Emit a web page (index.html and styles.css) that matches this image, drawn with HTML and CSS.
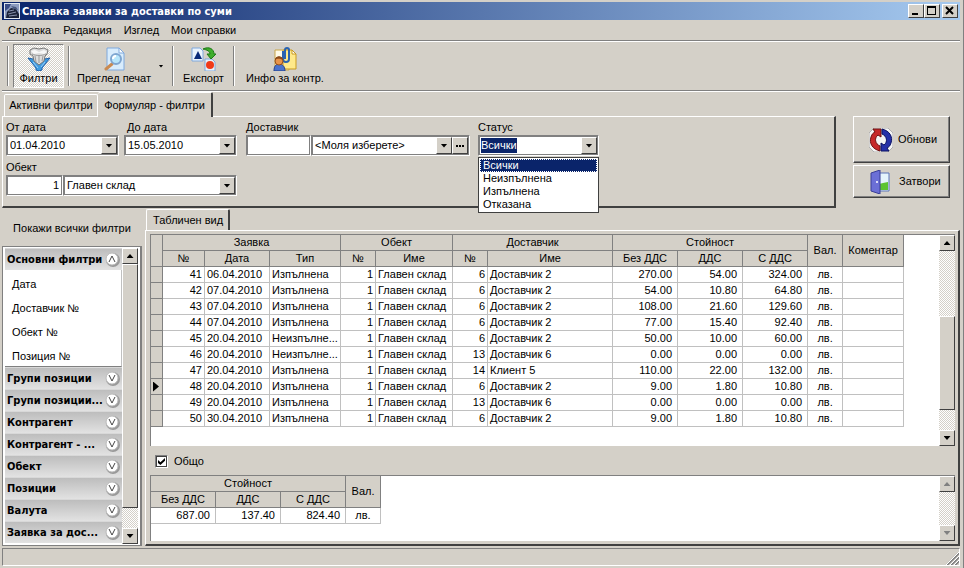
FILE: index.html
```
<!DOCTYPE html>
<html lang="bg">
<head>
    <meta charset="UTF-8">
    <title>Справка заявки за доставки по суми</title>
    <link rel="stylesheet" href="styles.css">
</head>

<body>
    <header class="titlebar">
        <svg class="app-icon" width="16" height="16" viewBox="0 0 16 16">
            <rect width="16" height="16" fill="#dfe6f0"/>
            <rect x="1" y="1" width="14" height="14" fill="#8d9cc0"/>
            <path d="M1 1h6l-2 4-4 3z" fill="#3b4d86"/>
            <path d="M3 9l4-4 5 1 3 5v4H2z" fill="#1b2238"/>
            <path d="M7 3l5 1 2 3-4-1z" fill="#48587f"/>
            <path d="M5 8l5-1M4 11l8-2M5 13l8-1" stroke="#8a93ad"/>
        </svg>
        <h1>Справка заявки за доставки по суми</h1>
        <button type="button" class="win-btn" aria-label="Минимизирай"><svg width="12" height="10"><path d="M2 7h6v2H2z"/></svg></button>
        <button type="button" class="win-btn" aria-label="Максимизирай"><svg width="12" height="10"><path d="M1 0h9v9H1zM2 2v6h7V2z" fill-rule="evenodd"/></svg></button>
        <button type="button" class="win-btn win-close" aria-label="Затвори прозореца"><svg width="12" height="10"><path d="M2 1l7 7M9 1L2 8" stroke="#000" stroke-width="2"/></svg></button>
    </header>

    <nav class="menu">
        <a href="#">Справка</a>
        <a href="#">Редакция</a>
        <a href="#">Изглед</a>
        <a href="#">Мои справки</a>
    </nav>

    <div class="toolbar">
        <span class="separator"></span>
        <button type="button" class="tool pressed">
            <svg width="24" height="24" viewBox="0 0 24 24">
                <path d="M1 11l5 1 6 6 6-6 5-1-8 10v2l-3 1-3-1v-2z" fill="#3f9be0" stroke="#1f5fa8"/>
                <path d="M3 3l4-2 5 1 5-1 4 2-1 4-2 2-1 5-5 4-5-4-1-5-3-2z" fill="#dcdcdc" stroke="#777"/>
                <path d="M4 4l4-1 4 2 5-2 3 2-3 2-5-1-5 1z" fill="#f8f8f8"/>
                <path d="M5 7c4 2 10 2 14 0M8 9l1 6M12 9v7M16 9l-1 5" fill="none" stroke="#999"/>
                <path d="M6 15l5 6M18 15l-4 5" fill="none" stroke="#9ad0f8"/>
            </svg>
            <span>Филтри</span>
        </button>
        <span class="separator"></span>
        <button type="button" class="tool tool-preview">
            <svg width="24" height="24" viewBox="0 0 24 24">
                <path d="M5 1h12l5 5v17H5z" fill="#d8ecfc" stroke="#7fa8dc"/>
                <path d="M17 1v5h5z" fill="#fff" stroke="#7fa8dc"/>
                <path d="M10 17l-6 5" stroke="#c98a52" stroke-width="3" stroke-linecap="round"/>
                <circle cx="14" cy="12" r="5" fill="#b8e6fb" stroke="#7fa6d0" stroke-width="2"/>
                <path d="M11 12a3 3 0 0 1 3-3" fill="none" stroke="#fff" stroke-width="2"/>
            </svg>
            <span>Преглед печат</span>
        </button>
        <button type="button" class="tool-arrow" aria-label="Още"><i class="down"></i></button>
        <span class="separator"></span>
        <button type="button" class="tool">
            <svg width="26" height="24" viewBox="0 0 26 24">
                <path d="M1 1h8l3 3v10H1z" fill="#eaf3fd" stroke="#7fa8dc"/>
                <path d="M7 4l4 8H3z" fill="#0a2a78"/>
                <path d="M14 12h7l3 3v9H14z" fill="#eaf3fd" stroke="#7fa8dc"/>
                <circle cx="19" cy="18" r="4" fill="#f03a18"/>
                <path d="M12 2c6-3 11 0 11 5h2l-5 5-4-5h3c0-3-3-4-7-5z" fill="#3fae2c" stroke="#1d7a17"/>
            </svg>
            <span>Експорт</span>
        </button>
        <span class="separator"></span>
        <button type="button" class="tool tool-info">
            <svg width="26" height="24" viewBox="0 0 26 24">
                <path d="M3 3h14v20H3z" fill="#fffbe8" stroke="#c9a648"/>
                <path d="M11 3h9l4 4v15H11z" fill="#ffe98a" stroke="#c99a20"/>
                <path d="M20 3v4h4z" fill="#fff" stroke="#c99a20"/>
                <path d="M11 4v8a3 3 0 0 0 6 0V3a2 2 0 0 0-4 0v9" fill="none" stroke="#2a63b0" stroke-width="2"/>
                <path d="M2 24c0-5 2-7 5-7s6 2 6 7z" fill="#4a72cc" stroke="#24408c"/>
                <circle cx="7" cy="14" r="4" fill="#e8944a" stroke="#94501c"/>
                <path d="M3 13c0-5 8-5 8 0-3-1-5-2-8 0z" fill="#8c4a18"/>
            </svg>
            <span>Инфо за контр.</span>
        </button>
    </div>

    <section class="top">
        <div class="filters">
            <div class="tabs">
                <button type="button" class="tab">Активни филтри</button>
                <button type="button" class="tab active">Формуляр - филтри</button>
            </div>
            <form class="filter-form">
                <div class="filter-row">
                    <div class="field">
                        <label for="fromDate">От дата</label>
                        <div class="combo">
                            <input type="text" id="fromDate" value="01.04.2010">
                            <button type="button" class="arrow" aria-label="Избор на дата"><i class="down"></i></button>
                        </div>
                    </div>
                    <div class="field">
                        <label for="toDate" class="indent">До дата</label>
                        <div class="combo">
                            <input type="text" id="toDate" value="15.05.2010">
                            <button type="button" class="arrow" aria-label="Избор на дата"><i class="down"></i></button>
                        </div>
                    </div>
                    <div class="field supplier">
                        <label for="supplierNo">Доставчик</label>
                        <div class="pair">
                            <div class="combo code"><input type="text" id="supplierNo"></div>
                            <div class="combo">
                                <select aria-label="Доставчик"><option>&lt;Моля изберете&gt;</option></select>
                                <button type="button" class="arrow" aria-label="Отвори"><i class="down"></i></button>
                                <button type="button" class="arrow" aria-label="Търсене"><i class="dots"></i></button>
                            </div>
                        </div>
                    </div>
                    <div class="field status">
                        <label for="status">Статус</label>
                        <div class="combo open">
                            <select id="status"><option>Всички</option></select>
                            <button type="button" class="arrow" aria-label="Отвори"><i class="down"></i></button>
                        </div>
                        <ul class="dropdown" role="listbox" aria-label="Статус">
                            <li role="option" class="selected" aria-selected="true">Всички</li>
                            <li role="option">Неизпълнена</li>
                            <li role="option">Изпълнена</li>
                            <li role="option">Отказана</li>
                        </ul>
                    </div>
                </div>
                <div class="filter-row">
                    <div class="field object">
                        <label for="objectNo">Обект</label>
                        <div class="pair">
                            <div class="combo code"><input type="text" id="objectNo" class="right" value="1"></div>
                            <div class="combo">
                                <select aria-label="Обект"><option>Главен склад</option></select>
                                <button type="button" class="arrow" aria-label="Отвори"><i class="down"></i></button>
                            </div>
                        </div>
                    </div>
                </div>
            </form>
        </div>
        <div class="actions">
            <button type="button" class="action refresh">
                <svg width="24" height="24" viewBox="0 0 24 24">
                    <path d="M5 0h14l5 5v14l-5 5H5l-5-5V5z" fill="#f4f4f4" stroke="#b0b0b0"/>
                    <path d="M11 23C3 21 0 15 2 9c1-3 2-4 4-5L4 1h8v8L9 7c-4 3-3 9 2 11z" fill="#c62828" stroke="#6e1010"/>
                    <path d="M13 1c8 2 11 8 9 14-1 3-2 4-4 5l2 3h-8v-8l3 2c4-3 3-9-2-11z" fill="#2530a8" stroke="#0c1260"/>
                </svg>
                <span>Обнови</span>
            </button>
            <button type="button" class="action">
                <svg width="24" height="24" viewBox="0 0 24 24">
                    <path d="M9 3h11v18H9z" fill="#e4f4fc" stroke="#5a74b8"/>
                    <path d="M10 14l4-1 5-1v8h-9z" fill="#5cc432"/>
                    <path d="M2 3l9-3v24l-9-3z" fill="#6b6fd6" stroke="#3a3e96"/>
                    <circle cx="8" cy="12" r="1" fill="#fff"/>
                </svg>
                <span>Затвори</span>
            </button>
        </div>
    </section>

    <main class="main">
        <aside class="sidebar">
            <a href="#" class="show-all">Покажи всички филтри</a>
            <div class="listbox">
                <div class="groups">
                    <button type="button" class="group"><span>Основни филтри</span><svg width="15" height="15" viewBox="0 0 15 15"><circle cx="8" cy="8" r="7" fill="#999"/><circle cx="7" cy="7" r="6" fill="#fff" stroke="#bbb"/><path d="M4 10l3-6 3 6" fill="none" stroke="#444"/></svg></button>
                    <ul class="group-items">
                        <li><a href="#">Дата</a></li>
                        <li><a href="#">Доставчик №</a></li>
                        <li><a href="#">Обект №</a></li>
                        <li><a href="#">Позиция №</a></li>
                    </ul>
                    <button type="button" class="group"><span>Групи позиции</span><svg width="15" height="15" viewBox="0 0 15 15"><circle cx="8" cy="8" r="7" fill="#999"/><circle cx="7" cy="7" r="6" fill="#fff" stroke="#bbb"/><path d="M4 4l3 6 3-6" fill="none" stroke="#444"/></svg></button>
                    <button type="button" class="group"><span>Групи позиции...</span><svg width="15" height="15" viewBox="0 0 15 15"><circle cx="8" cy="8" r="7" fill="#999"/><circle cx="7" cy="7" r="6" fill="#fff" stroke="#bbb"/><path d="M4 4l3 6 3-6" fill="none" stroke="#444"/></svg></button>
                    <button type="button" class="group"><span>Контрагент</span><svg width="15" height="15" viewBox="0 0 15 15"><circle cx="8" cy="8" r="7" fill="#999"/><circle cx="7" cy="7" r="6" fill="#fff" stroke="#bbb"/><path d="M4 4l3 6 3-6" fill="none" stroke="#444"/></svg></button>
                    <button type="button" class="group"><span>Контрагент - ...</span><svg width="15" height="15" viewBox="0 0 15 15"><circle cx="8" cy="8" r="7" fill="#999"/><circle cx="7" cy="7" r="6" fill="#fff" stroke="#bbb"/><path d="M4 4l3 6 3-6" fill="none" stroke="#444"/></svg></button>
                    <button type="button" class="group"><span>Обект</span><svg width="15" height="15" viewBox="0 0 15 15"><circle cx="8" cy="8" r="7" fill="#999"/><circle cx="7" cy="7" r="6" fill="#fff" stroke="#bbb"/><path d="M4 4l3 6 3-6" fill="none" stroke="#444"/></svg></button>
                    <button type="button" class="group"><span>Позиции</span><svg width="15" height="15" viewBox="0 0 15 15"><circle cx="8" cy="8" r="7" fill="#999"/><circle cx="7" cy="7" r="6" fill="#fff" stroke="#bbb"/><path d="M4 4l3 6 3-6" fill="none" stroke="#444"/></svg></button>
                    <button type="button" class="group"><span>Валута</span><svg width="15" height="15" viewBox="0 0 15 15"><circle cx="8" cy="8" r="7" fill="#999"/><circle cx="7" cy="7" r="6" fill="#fff" stroke="#bbb"/><path d="M4 4l3 6 3-6" fill="none" stroke="#444"/></svg></button>
                    <button type="button" class="group"><span>Заявка за дос...</span><svg width="15" height="15" viewBox="0 0 15 15"><circle cx="8" cy="8" r="7" fill="#999"/><circle cx="7" cy="7" r="6" fill="#fff" stroke="#bbb"/><path d="M4 4l3 6 3-6" fill="none" stroke="#444"/></svg></button>
                </div>
                <div class="scrollbar side-scroll">
                    <button type="button" class="arrow" aria-label="Нагоре"><i class="up"></i></button>
                    <div class="thumb"></div>
                    <div class="after"></div>
                    <button type="button" class="arrow" aria-label="Надолу"><i class="down"></i></button>
                </div>
            </div>
        </aside>

        <section class="report">
            <div class="tabs">
                <button type="button" class="tab active">Табличен вид</button>
            </div>
            <div class="page">
                <div class="grid grid-main">
                    <div class="grid-view">
                        <table>
                            <colgroup>
                                <col class="w12"><col class="w42"><col class="w65"><col class="w71">
                                <col class="w35"><col class="w77"><col class="w35"><col class="w125">
                                <col class="w65"><col class="w65"><col class="w65"><col class="w35"><col class="w61">
                            </colgroup>
                            <thead>
                                <tr>
                                    <th rowspan="2"></th>
                                    <th colspan="3">Заявка</th>
                                    <th colspan="2">Обект</th>
                                    <th colspan="2">Доставчик</th>
                                    <th colspan="3">Стойност</th>
                                    <th rowspan="2">Вал.</th>
                                    <th rowspan="2">Коментар</th>
                                </tr>
                                <tr>
                                    <th>№</th><th>Дата</th><th>Тип</th>
                                    <th>№</th><th>Име</th>
                                    <th>№</th><th>Име</th>
                                    <th>Без ДДС</th><th>ДДС</th><th>С ДДС</th>
                                </tr>
                            </thead>
                            <tbody>
                                <tr><th></th><td class="num">41</td><td>06.04.2010</td><td>Изпълнена</td><td class="num">1</td><td>Главен склад</td><td class="num">6</td><td>Доставчик 2</td><td class="sum">270.00</td><td class="sum">54.00</td><td class="sum">324.00</td><td class="cur">лв.</td><td></td></tr>
                                <tr><th></th><td class="num">42</td><td>07.04.2010</td><td>Изпълнена</td><td class="num">1</td><td>Главен склад</td><td class="num">6</td><td>Доставчик 2</td><td class="sum">54.00</td><td class="sum">10.80</td><td class="sum">64.80</td><td class="cur">лв.</td><td></td></tr>
                                <tr><th></th><td class="num">43</td><td>07.04.2010</td><td>Изпълнена</td><td class="num">1</td><td>Главен склад</td><td class="num">6</td><td>Доставчик 2</td><td class="sum">108.00</td><td class="sum">21.60</td><td class="sum">129.60</td><td class="cur">лв.</td><td></td></tr>
                                <tr><th></th><td class="num">44</td><td>07.04.2010</td><td>Изпълнена</td><td class="num">1</td><td>Главен склад</td><td class="num">6</td><td>Доставчик 2</td><td class="sum">77.00</td><td class="sum">15.40</td><td class="sum">92.40</td><td class="cur">лв.</td><td></td></tr>
                                <tr><th></th><td class="num">45</td><td>20.04.2010</td><td>Неизпълне...</td><td class="num">1</td><td>Главен склад</td><td class="num">6</td><td>Доставчик 2</td><td class="sum">50.00</td><td class="sum">10.00</td><td class="sum">60.00</td><td class="cur">лв.</td><td></td></tr>
                                <tr><th></th><td class="num">46</td><td>20.04.2010</td><td>Неизпълне...</td><td class="num">1</td><td>Главен склад</td><td class="num">13</td><td>Доставчик 6</td><td class="sum">0.00</td><td class="sum">0.00</td><td class="sum">0.00</td><td class="cur">лв.</td><td></td></tr>
                                <tr><th></th><td class="num">47</td><td>20.04.2010</td><td>Изпълнена</td><td class="num">1</td><td>Главен склад</td><td class="num">14</td><td>Клиент 5</td><td class="sum">110.00</td><td class="sum">22.00</td><td class="sum">132.00</td><td class="cur">лв.</td><td></td></tr>
                                <tr><th><i class="current"></i></th><td class="num">48</td><td>20.04.2010</td><td>Изпълнена</td><td class="num">1</td><td>Главен склад</td><td class="num">6</td><td>Доставчик 2</td><td class="sum">9.00</td><td class="sum">1.80</td><td class="sum">10.80</td><td class="cur">лв.</td><td></td></tr>
                                <tr><th></th><td class="num">49</td><td>20.04.2010</td><td>Изпълнена</td><td class="num">1</td><td>Главен склад</td><td class="num">13</td><td>Доставчик 6</td><td class="sum">0.00</td><td class="sum">0.00</td><td class="sum">0.00</td><td class="cur">лв.</td><td></td></tr>
                                <tr><th></th><td class="num">50</td><td>30.04.2010</td><td>Изпълнена</td><td class="num">1</td><td>Главен склад</td><td class="num">6</td><td>Доставчик 2</td><td class="sum">9.00</td><td class="sum">1.80</td><td class="sum">10.80</td><td class="cur">лв.</td><td></td></tr>
                            </tbody>
                        </table>
                    </div>
                    <div class="scrollbar grid-scroll">
                        <button type="button" class="arrow" aria-label="Нагоре"><i class="up"></i></button>
                        <div class="before"></div>
                        <div class="thumb"></div>
                        <div class="after"></div>
                        <button type="button" class="arrow" aria-label="Надолу"><i class="down"></i></button>
                    </div>
                </div>
                <div class="total-toggle">
                    <input type="checkbox" id="total" checked>
                    <label for="total">Общо</label>
                </div>
                <div class="grid grid-total">
                    <div class="grid-view">
                        <table>
                            <colgroup><col class="w65"><col class="w65"><col class="w65"><col class="w35"></colgroup>
                            <thead>
                                <tr><th colspan="3">Стойност</th><th rowspan="2">Вал.</th></tr>
                                <tr><th>Без ДДС</th><th>ДДС</th><th>С ДДС</th></tr>
                            </thead>
                            <tbody>
                                <tr><td class="sum">687.00</td><td class="sum">137.40</td><td class="sum">824.40</td><td class="cur">лв.</td></tr>
                            </tbody>
                        </table>
                    </div>
                    <div class="scrollbar">
                        <button type="button" class="arrow" disabled aria-label="Нагоре"><i class="up"></i></button>
                        <div class="after"></div>
                        <button type="button" class="arrow" disabled aria-label="Надолу"><i class="down"></i></button>
                    </div>
                </div>
            </div>
        </section>
    </main>

    <footer class="statusbar">
        <svg width="14" height="14" viewBox="0 0 14 14"><path d="M2 14L14 2M6 14l8-8M10 14l4-4" stroke="#808080" stroke-width="2"/><path d="M1 14L14 1M5 14l9-9M9 14l5-5" stroke="#fff"/></svg>
    </footer>
</body>
</html>
```

FILE: styles.css
```
* {
    box-sizing: border-box;
}

body {
    display: flex;
    flex-direction: column;
    min-height: 100vh;
    margin: 0;
    padding: 2px 3px 2px 2px;
    background-color: #d4d0c8;
    border-right: 1px solid #808080;
    font-family: "Liberation Sans", Arial, sans-serif;
    font-size: 11px;
    line-height: 15px;
    color: #000;
}

button, input, select {
    margin: 0;
    padding: 0;
    border: none;
    background-color: transparent;
    font: inherit;
    color: inherit;
}

a {
    color: inherit;
    text-decoration: none;
}

ul {
    margin: 0;
    padding: 0;
    list-style: none;
}

svg {
    display: block;
    flex: none;
}

/* Title bar */
.titlebar {
    display: flex;
    align-items: center;
    height: 18px;
    padding: 0 2px;
    background: linear-gradient(to right, #0a246a, #a6caf0);
}

.titlebar h1 {
    flex: 1;
    margin: 0;
    padding-left: 2px;
    font-family: "DejaVu Sans Condensed", Tahoma, sans-serif;
    font-size: 11px;
    font-weight: bold;
    color: #fff;
}

.win-btn {
    display: flex;
    align-items: center;
    justify-content: center;
    width: 16px;
    height: 14px;
    background-color: #d4d0c8;
    border: 1px solid;
    border-color: #fff #404040 #404040 #fff;
}

.win-close {
    margin-left: 2px;
}

/* Menu */
.menu {
    display: flex;
    gap: 12px;
    height: 21px;
    padding: 3px 6px;
    border-bottom: 1px solid #808080;
}

/* Toolbar */
.toolbar {
    display: flex;
    height: 50px;
    padding: 2px 1px;
    border-top: 1px solid #fff;
    border-bottom: 1px solid #808080;
}

.separator {
    width: 2px;
    margin: 2px 4px;
    border-left: 1px solid #808080;
    border-right: 1px solid #fff;
}

.tool {
    display: flex;
    flex-direction: column;
    align-items: center;
    justify-content: space-between;
    width: 51px;
    padding: 2px 0 1px;
    border: 1px solid transparent;
    white-space: nowrap;
}

.tool-preview {
    width: 80px;
}

.tool-info {
    width: 92px;
}

.tool.pressed {
    background: repeating-conic-gradient(#fff 0 25%, #d4d0c8 0 50%) 0 0 / 2px 2px;
    border-color: #808080 #fff #fff #808080;
}

.tool-arrow {
    width: 14px;
}

/* Arrow glyphs */
.down, .up {
    display: block;
    width: 7px;
    height: 4px;
    margin: 0 auto;
    background-color: #000;
    clip-path: polygon(0 0, 100% 0, 50% 100%);
}

.up {
    clip-path: polygon(50% 0, 100% 100%, 0 100%);
}

.tool-arrow .down {
    width: 5px;
    height: 3px;
}

.dots {
    display: block;
    width: 8px;
    height: 2px;
    margin: 0 auto;
    background: repeating-linear-gradient(to right, #000 0 2px, transparent 2px 3px);
}

.arrow {
    flex: none;
    width: 16px;
    height: 16px;
    background-color: #d4d0c8;
    border: 1px solid;
    border-color: #fff #404040 #404040 #fff;
}

.arrow:disabled i {
    background-color: #808080;
}

/* Filters */
.top {
    display: flex;
    border-top: 1px solid #fff;
}

.filters {
    flex: 1;
}

.tabs {
    display: flex;
    align-items: flex-end;
    height: 24px;
}

.tab {
    height: 22px;
    padding: 0 4px;
    border: 1px solid #fff;
    border-bottom: none;
    border-radius: 2px 2px 0 0;
    white-space: nowrap;
}

.filters .tab:first-child {
    margin-left: 2px;
    width: 94px;
}

.tab.active {
    height: 25px;
    margin-bottom: -1px;
    padding: 0 6px;
    background-color: #d4d0c8;
    border-right: 2px solid #404040;
}

.filters .tab.active {
    width: 115px;
    border-left: none;
}

.filter-form {
    display: flex;
    flex-direction: column;
    gap: 4px;
    height: 92px;
    padding: 3px;
    border: 1px solid #fff;
    border-right: 2px solid #404040;
    border-bottom: 2px solid #404040;
}

.filter-row {
    display: flex;
    gap: 5px;
}

.field {
    position: relative;
    width: 113px;
}

.field label {
    display: block;
}

.field .indent {
    padding-left: 3px;
}

.field.supplier {
    width: 224px;
    margin-left: 4px;
}

.field.status {
    width: 121px;
    margin-left: 3px;
}

.field.object {
    width: 231px;
}

.pair {
    display: flex;
}

.combo {
    display: flex;
    flex: 1;
    height: 21px;
    padding: 1px;
    background-color: #fff;
    border: 1px solid;
    border-color: #808080 #fff #fff #808080;
    outline: 1px solid #808080;
    outline-offset: -2px;
}

.combo input, .combo select {
    flex: 1;
    min-width: 0;
    padding: 0 2px;
    appearance: none;
}

.combo.code {
    flex: none;
    width: 65px;
}

.object .code {
    width: 57px;
}

.combo .right {
    text-align: right;
}

.combo .arrow {
    height: 17px;
}

.combo.open select {
    flex: none;
    margin: 1px auto 1px 1px;
    padding: 0;
    background-color: #0a246a;
    color: #fff;
}

.dropdown {
    position: absolute;
    top: 37px;
    left: 0;
    z-index: 1;
    width: 100%;
    padding: 1px;
    background-color: #fff;
    border: 1px solid #404040;
    line-height: 13px;
}

.dropdown li {
    padding-left: 3px;
}

.dropdown .selected {
    background-color: #0a246a;
    color: #fff;
    outline: 1px dotted #fff;
    outline-offset: -1px;
}

/* Right buttons */
.actions {
    display: flex;
    flex-direction: column;
    gap: 2px;
    width: 124px;
    padding: 24px 10px 0 17px;
}

.action {
    display: flex;
    align-items: center;
    gap: 6px;
    height: 33px;
    padding-left: 15px;
    border: 1px solid;
    border-color: #fff #404040 #404040 #fff;
    box-shadow: inset -1px -1px #808080;
}

.action.refresh {
    height: 47px;
    gap: 5px;
}

/* Sidebar */
.main {
    display: flex;
    flex: 1;
    gap: 3px;
}

.sidebar {
    display: flex;
    flex-direction: column;
    width: 140px;
}

.show-all {
    height: 38px;
    line-height: 40px;
    text-align: center;
}

.listbox {
    display: flex;
    flex: 1;
    padding: 1px 2px;
    background-color: #fff;
    border: 1px solid #808080;
    border-right-width: 2px;
}

.groups {
    flex: 1;
    min-width: 0;
}

.group {
    display: flex;
    align-items: center;
    justify-content: space-between;
    width: 100%;
    height: 22px;
    padding: 0 2px;
    background: linear-gradient(to bottom, #bdbdbd, #e2e2e2);
    border-top: 1px solid #d8d8d8;
    font-family: "DejaVu Sans Condensed", Verdana, sans-serif;
    font-weight: bold;
    white-space: nowrap;
}

.group-items {
    line-height: 20px;
    border-bottom: 1px solid #808080;
    border-right: 1px solid #c0c0c0;
}

.group-items li {
    padding: 4px 0 0 7px;
}

/* Scroll bars */
.scrollbar {
    display: flex;
    flex: none;
    flex-direction: column;
    width: 16px;
    background: repeating-conic-gradient(#fff 0 25%, #d4d0c8 0 50%) 0 0 / 2px 2px;
}

.thumb {
    background-color: #d4d0c8;
    border: 1px solid;
    border-color: #fff #404040 #404040 #fff;
}

.after {
    flex: 20;
}

.side-scroll .thumb {
    flex: 244;
}

.grid-scroll .before {
    flex: 66;
}

.grid-scroll .thumb {
    flex: 94;
}

/* Report */
.report {
    display: flex;
    flex: 1;
    flex-direction: column;
    min-width: 0;
}

.report .tabs {
    height: 22px;
    padding-left: 1px;
}

.report .tab {
    height: 22px;
    width: 84px;
}

.page {
    display: flex;
    flex: 1;
    flex-direction: column;
    padding: 3px 3px 3px 4px;
    border: 1px solid #fff;
    border-right: 2px solid #404040;
    border-bottom: 2px solid #404040;
}

.grid {
    display: flex;
    background-color: #fff;
    border-top: 1px solid #808080;
    border-left: 1px solid #808080;
}

.grid-main {
    flex: 1;
}

.grid-total {
    height: 66px;
}

.grid-view {
    flex: 1;
    min-width: 0;
    overflow: hidden;
}

table {
    width: 0;
    table-layout: fixed;
    border-collapse: separate;
    border-spacing: 0;
    line-height: 15px;
    white-space: nowrap;
}

th, td {
    height: 16px;
    padding: 0 2px;
    overflow: hidden;
    border-right: 1px solid #c0c0c0;
    border-bottom: 1px solid #c0c0c0;
}

th {
    background-color: #d4d0c8;
    border-color: #808080;
    font-weight: normal;
}

.num {
    text-align: right;
}

.sum {
    padding-right: 5px;
    text-align: right;
}

.cur {
    text-align: center;
}

.current {
    display: block;
    width: 6px;
    height: 10px;
    background-color: #000;
    clip-path: polygon(0 0, 100% 50%, 0 100%);
}

.w12 { width: 12px; }
.w35 { width: 35px; }
.w42 { width: 42px; }
.w61 { width: 61px; }
.w65 { width: 65px; }
.w71 { width: 71px; }
.w77 { width: 77px; }
.w125 { width: 125px; }

.total-toggle {
    display: flex;
    align-items: center;
    gap: 6px;
    height: 29px;
    padding: 2px 0 0 5px;
}

.total-toggle input {
    width: 13px;
    height: 13px;
    appearance: none;
    background-color: #fff;
    border: 1px solid;
    border-color: #808080 #fff #fff #808080;
    outline: 1px solid #404040;
    outline-offset: -2px;
}

.total-toggle input:checked::before {
    content: "";
    display: block;
    width: 7px;
    height: 7px;
    margin: 2px;
    background-color: #000;
    clip-path: polygon(0 30%, 35% 60%, 100% 0, 100% 40%, 35% 100%, 0 70%);
}

/* Status bar */
.statusbar {
    display: flex;
    align-items: flex-end;
    justify-content: flex-end;
    height: 18px;
    margin-top: 2px;
    border: 1px solid;
    border-color: #808080 #fff #fff #808080;
}
```
